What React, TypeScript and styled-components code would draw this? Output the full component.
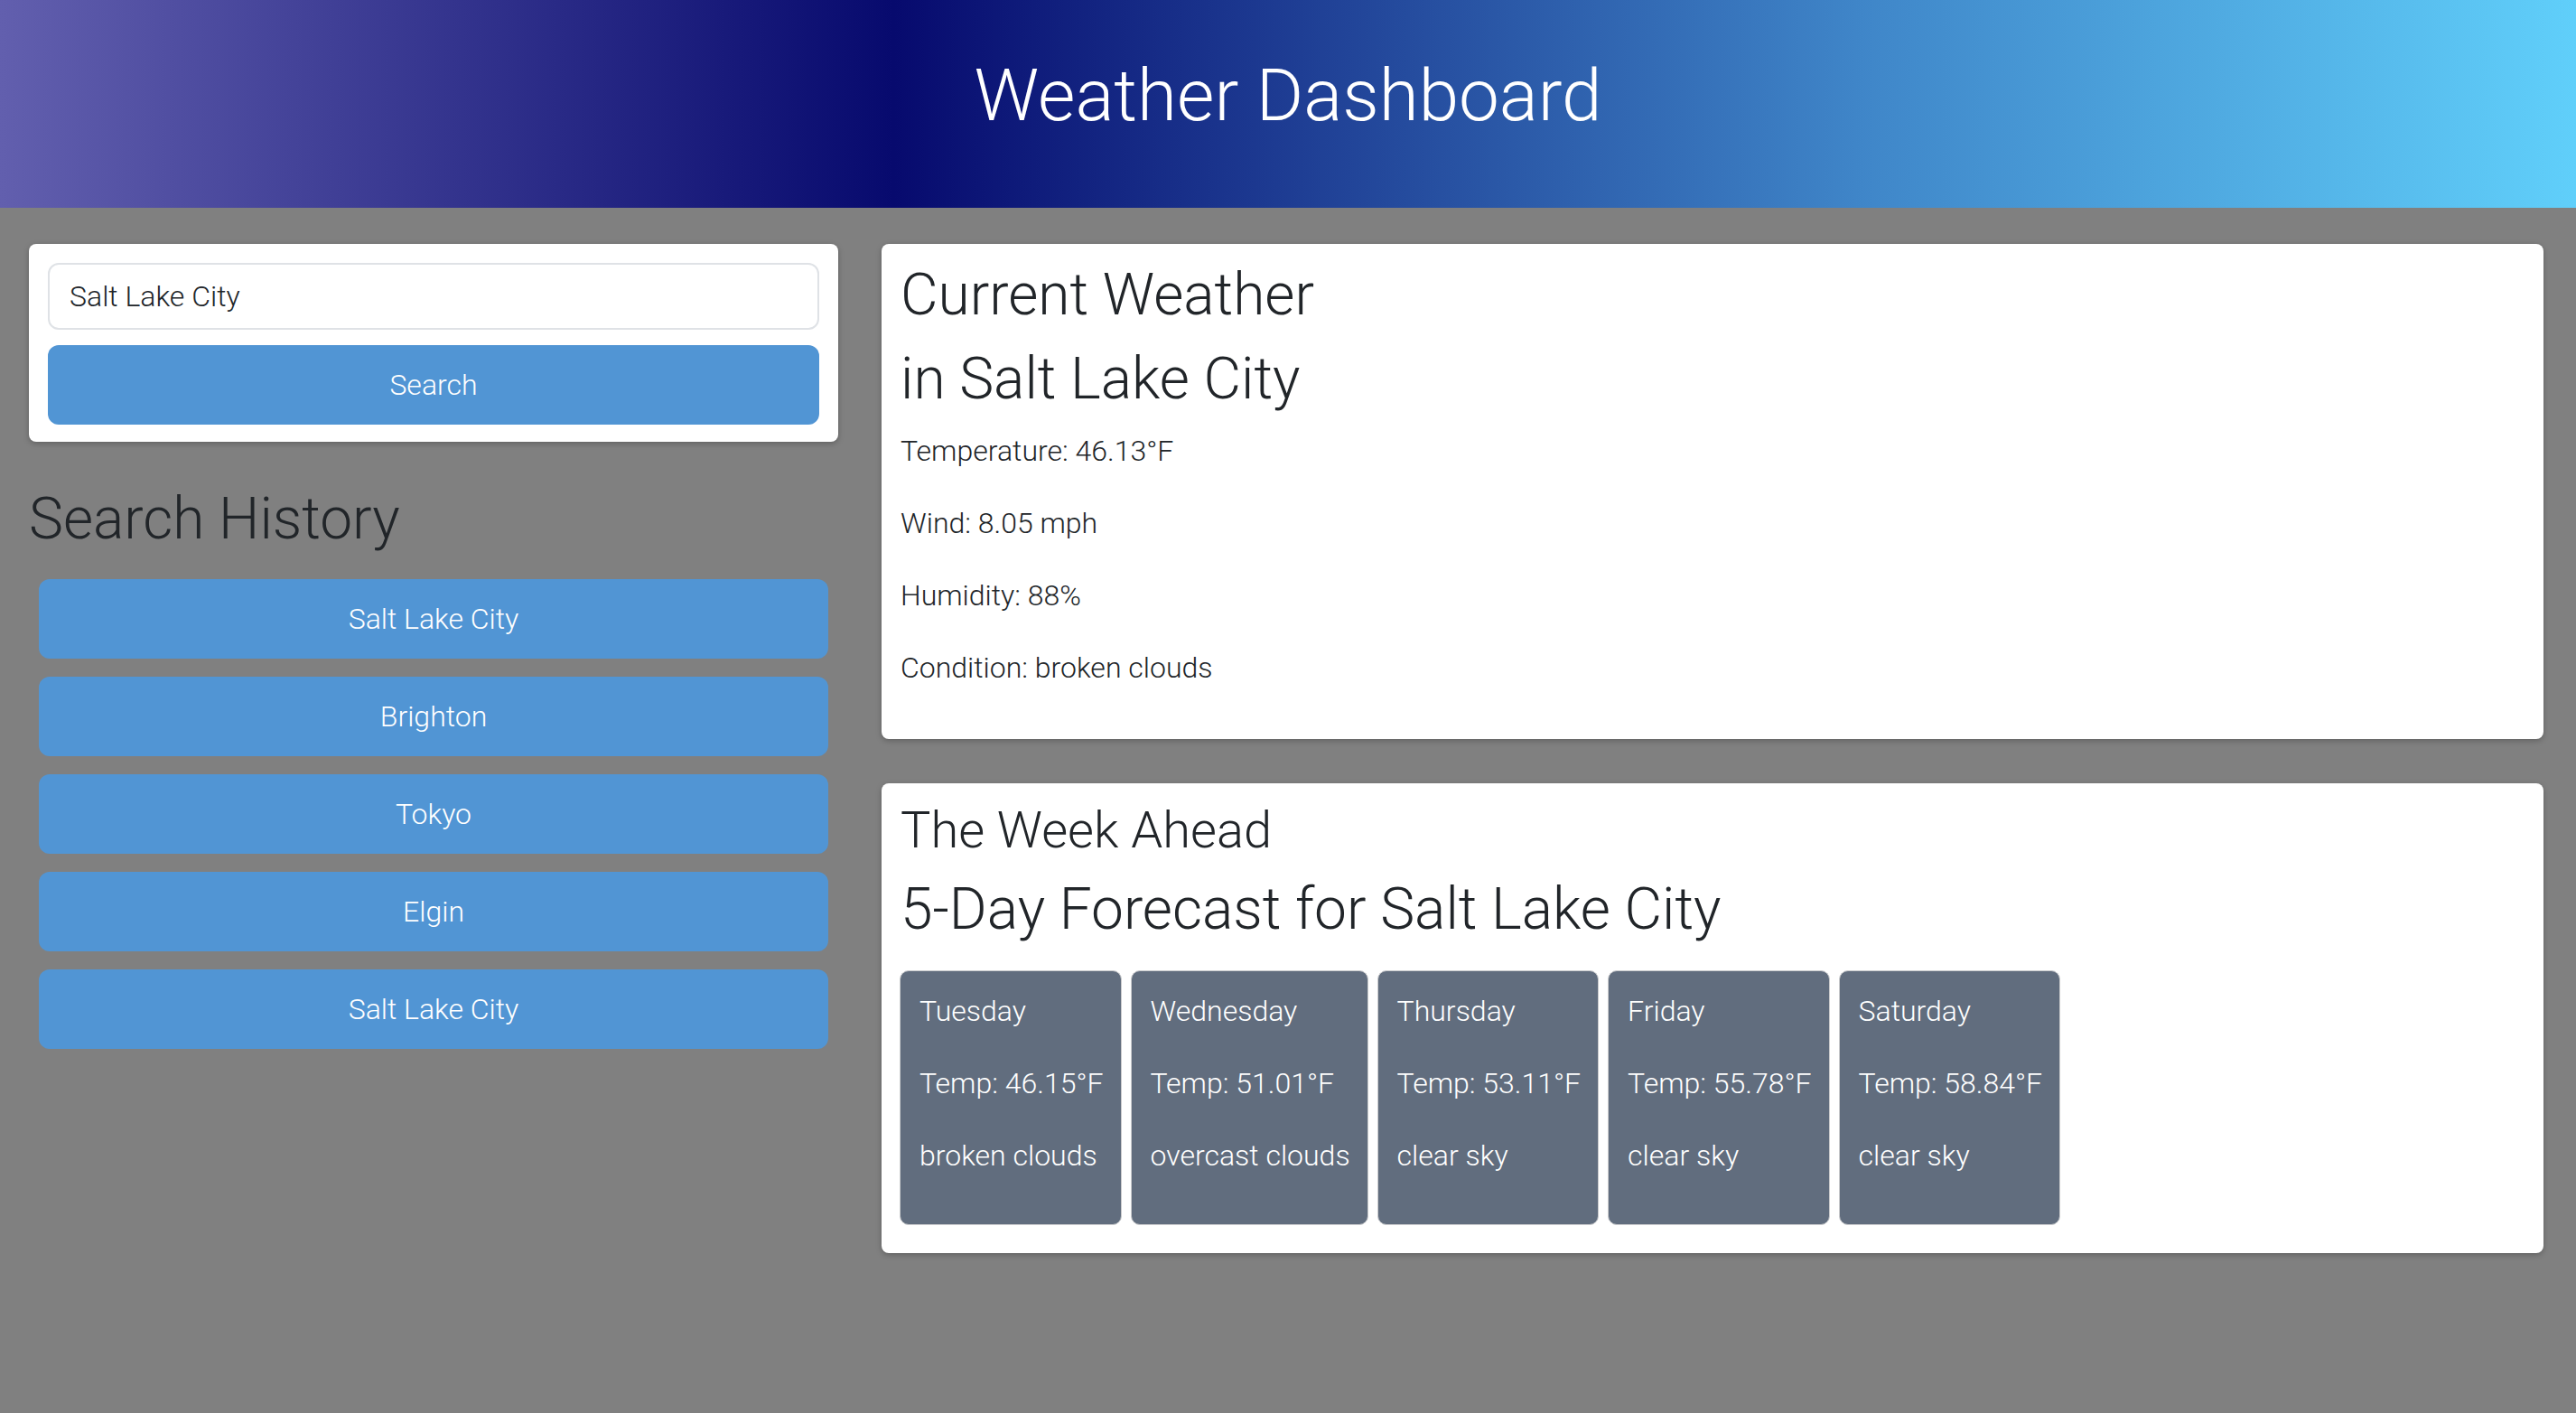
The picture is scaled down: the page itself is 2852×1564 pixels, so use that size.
import React from "react";
import styled, { createGlobalStyle } from "styled-components";

const GlobalStyle = createGlobalStyle`
  * { box-sizing: border-box; }
  html, body { margin: 0; padding: 0; }
  body {
    background: #808080;
    font-family: Roboto, "Liberation Sans", sans-serif;
    font-weight: 300;
    color: #212529;
    min-height: 1564px;
  }
`;

const Header = styled.header`
  height: 230px;
  padding-top: 58px;
  background: linear-gradient(to right, #625fae 0%, #070a6e 34.7%, #3f85c8 72%, #60cffa 100%);
  text-align: center;
`;

const Title = styled.h1`
  margin: 0;
  font-size: 80px;
  line-height: 1.2;
  font-weight: 300;
  color: #ffffff;
`;

const Main = styled.main`
  display: grid;
  grid-template-columns: 896px 1fr;
  gap: 48px;
  padding: 40px 36px 40px 32px;
  align-items: start;
`;

const Column = styled.div`
  display: flex;
  flex-direction: column;
`;

const Panel = styled.section<{ $gap?: number }>`
  background: #ffffff;
  border-radius: 8px;
  box-shadow: 0 2px 6px rgba(0, 0, 0, 0.25);
  margin-bottom: ${(p) => p.$gap ?? 0}px;
`;

const SearchPanel = styled(Panel)`
  display: flex;
  flex-direction: column;
  gap: 17px;
  padding: 21px 21px 19px;
`;

const Input = styled.input`
  height: 74px;
  width: 100%;
  padding: 0 22px;
  border: 2px solid #dfe2e6;
  border-radius: 12px;
  font-family: Roboto, "Liberation Sans", sans-serif;
  font-size: 32px;
  font-weight: 300;
  color: #212529;
  background: #fff;
  outline: none;
`;

const BlueButton = styled.button`
  height: 88px;
  width: 100%;
  border: none;
  border-radius: 12px;
  background: #5195d4;
  color: #ffffff;
  font-family: Roboto, "Liberation Sans", sans-serif;
  font-size: 32px;
  font-weight: 300;
  cursor: pointer;
`;

const H2 = styled.h2`
  margin: 0 0 16px;
  font-size: 64px;
  line-height: 1.2;
  font-weight: 300;
  color: #212529;
`;

const H3 = styled.h3`
  margin: 0 0 16px;
  font-size: 56px;
  line-height: 1.2;
  font-weight: 300;
  color: #212529;
`;

const HistoryHeading = styled(H2)`
  margin-top: 48px;
`;

const HistoryList = styled.div`
  display: flex;
  flex-direction: column;
  gap: 20px;
  padding: 11px 11px 0;
`;

const InfoPanel = styled(Panel)<{ $bottom: number }>`
  padding: 19px 21px ${(p) => p.$bottom}px;
`;

const Line = styled.p`
  margin: 0 0 32px;
  font-size: 32px;
  line-height: 48px;
  font-weight: 300;
`;

const ForecastRow = styled.div`
  display: flex;
  gap: 10px;
  padding-top: 12px;
  margin: 0 0 12px -1px;
`;

const DayCard = styled.div`
  background: #616d7e;
  border: 1px solid #cacbcd;
  border-radius: 10px;
  padding: 20px 19px 20px 21px;
  color: #ffffff;
`;

const DayLine = styled(Line)`
  color: #ffffff;
  white-space: nowrap;
`;

const history = ["Salt Lake City", "Brighton", "Tokyo", "Elgin", "Salt Lake City"];

const forecast = [
  { day: "Tuesday", temp: "46.15", cond: "broken clouds" },
  { day: "Wednesday", temp: "51.01", cond: "overcast clouds" },
  { day: "Thursday", temp: "53.11", cond: "clear sky" },
  { day: "Friday", temp: "55.78", cond: "clear sky" },
  { day: "Saturday", temp: "58.84", cond: "clear sky" },
];

export default function App() {
  return (
    <>
      <GlobalStyle />
      <Header>
        <Title>Weather Dashboard</Title>
      </Header>
      <Main>
        <Column>
          <SearchPanel>
            <Input defaultValue="Salt Lake City" />
            <BlueButton>Search</BlueButton>
          </SearchPanel>
          <HistoryHeading>Search History</HistoryHeading>
          <HistoryList>
            {history.map((c, i) => (
              <BlueButton key={i}>{c}</BlueButton>
            ))}
          </HistoryList>
        </Column>
        <Column>
          <InfoPanel $gap={49} $bottom={23}>
            <H2>Current Weather</H2>
            <H2>in Salt Lake City</H2>
            <Line>Temperature: 46.13°F</Line>
            <Line>Wind: 8.05 mph</Line>
            <Line>Humidity: 88%</Line>
            <Line>Condition: broken clouds</Line>
          </InfoPanel>
          <InfoPanel $bottom={19}>
            <H3>The Week Ahead</H3>
            <H2>5-Day Forecast for Salt Lake City</H2>
            <ForecastRow>
              {forecast.map((f) => (
                <DayCard key={f.day}>
                  <DayLine>{f.day}</DayLine>
                  <DayLine>Temp: {f.temp}°F</DayLine>
                  <DayLine>{f.cond}</DayLine>
                </DayCard>
              ))}
            </ForecastRow>
          </InfoPanel>
        </Column>
      </Main>
    </>
  );
}
